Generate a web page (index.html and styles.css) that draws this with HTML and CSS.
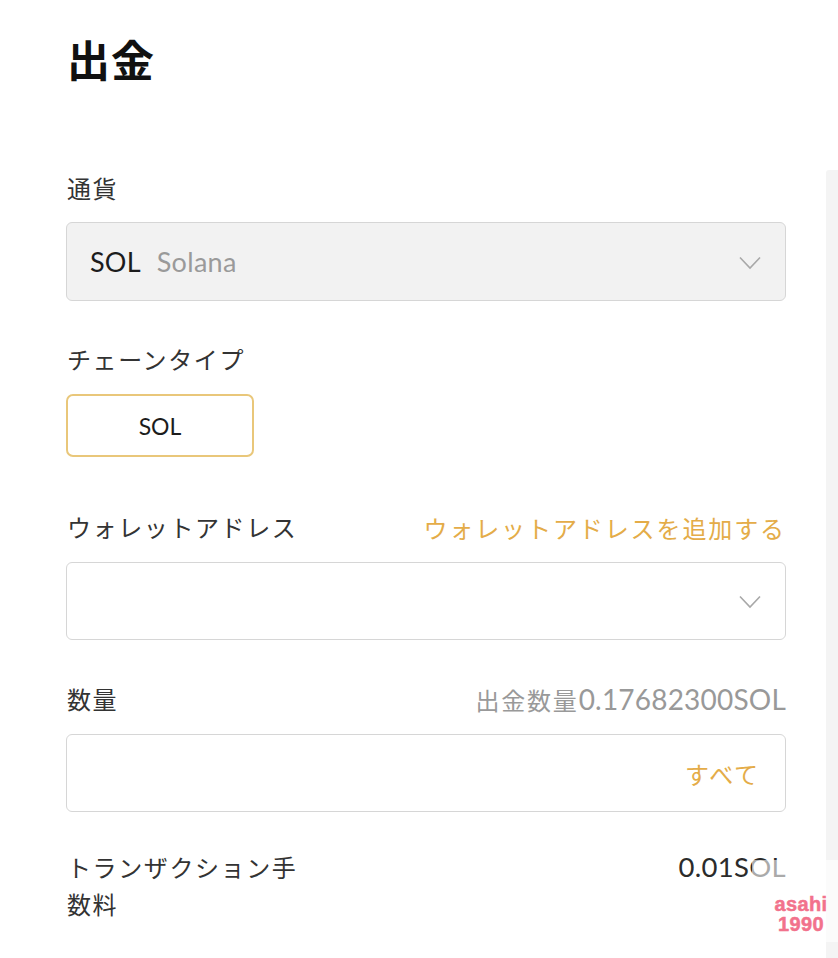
FILE: index.html
```html
<!DOCTYPE html>
<html lang="ja">
<head>
<meta charset="utf-8">
<link rel="stylesheet" href="styles.css">
</head>
<body>
<div class="page">
  <main class="main">
    <h1 class="title">出金</h1>

    <div class="label">通貨</div>
    <div class="select select-disabled">
      <span class="sym">SOL</span><span class="name">Solana</span>
      <svg class="chev" width="22" height="14" viewBox="0 0 22 14"><path d="M1 1.5 L11 12 L21 1.5" fill="none" stroke="#a8a8a8" stroke-width="1.6"/></svg>
    </div>

    <div class="label sec">チェーンタイプ</div>
    <div class="chip">SOL</div>

    <div class="row sec">
      <span class="label">ウォレットアドレス</span>
      <span class="link">ウォレットアドレスを追加する</span>
    </div>
    <div class="select">
      <svg class="chev" width="22" height="14" viewBox="0 0 22 14"><path d="M1 1.5 L11 12 L21 1.5" fill="none" stroke="#a8a8a8" stroke-width="1.6"/></svg>
    </div>

    <div class="row sec">
      <span class="label">数量</span>
      <span class="hint"><span class="hint-jp">出金数量</span>0.17682300SOL</span>
    </div>
    <div class="select input">
      <span class="link all">すべて</span>
    </div>

    <div class="fee sec">
      <span class="fee-label">トランザクション手数料</span>
      <span class="fee-value">0.01SOL</span>
    </div>
  </main>
  <aside class="side"></aside>
</div>
<div class="watermark"><span>asahi</span><span>1990</span></div>
</body>
</html>
```

FILE: styles.css
```css
html, body {
  margin: 0;
  padding: 0;
  background: #ffffff;
}
body {
  font-family: "Lato", "Noto Sans CJK JP", sans-serif;
  color: #2b2b2b;
  width: 838px;
  height: 958px;
  overflow: hidden;
  position: relative;
}
.page {
  display: flex;
  width: 838px;
  height: 958px;
}
.main {
  width: 720px;
  padding-left: 66px;
  padding-right: 40px;
  display: flex;
  flex-direction: column;
}
.side {
  width: 12px;
  margin-top: 170px;
  background: #f4f4f4;
  border-top-left-radius: 3px;
}
.title {
  margin: 33px 0 0 1px;
  font-family: "Noto Sans CJK JP", sans-serif;
  font-size: 43px;
  line-height: 50px;
  font-weight: 700;
  color: #111;
  letter-spacing: 1px;
}
.label {
  font-family: "Noto Sans CJK JP", sans-serif;
  font-size: 24px;
  line-height: 34px;
  letter-spacing: 1.6px;
  color: #333;
  padding-left: 1px;
}
.title + .label {
  margin-top: 88px;
}
.sec {
  margin-top: 41px;
}
.row.sec {
  margin-top: 53px;
}
.row.sec ~ .row.sec {
  margin-top: 42px;
}
.row {
  display: flex;
  justify-content: space-between;
  align-items: center;
  height: 34px;
}
.row .label {
  padding-left: 1px;
}
.select {
  margin-top: 18px;
  height: 78px;
  box-sizing: border-box;
  border: 1.5px solid #d6d6d6;
  border-radius: 6px;
  background: #fff;
  display: flex;
  align-items: center;
  padding: 0 24px 0 23px;
  position: relative;
}
.label + .select {
  margin-top: 17px;
}
.select-disabled {
  background: #f2f2f2;
  height: 79px;
}
.sym {
  font-size: 27px;
  color: #1c1c1c;
  letter-spacing: 0.2px;
}
.name {
  font-size: 27px;
  color: #9a9a9a;
  margin-left: 16px;
  letter-spacing: 0.3px;
}
.chev {
  margin-left: auto;
  margin-top: 2px;
}
.chip {
  margin-top: 18px;
  width: 188px;
  height: 63px;
  box-sizing: border-box;
  border: 2px solid #e9c77a;
  border-radius: 7px;
  display: flex;
  align-items: center;
  justify-content: center;
  font-size: 23px;
  color: #1c1c1c;
}
.link {
  font-family: "Noto Sans CJK JP", sans-serif;
  font-size: 24px;
  letter-spacing: 1.9px;
  color: #e4ac48;
  font-weight: 400;
}
.hint {
  font-family: "Lato", "Noto Sans CJK JP", sans-serif;
  font-size: 28px;
  color: #999;
  letter-spacing: 0.2px;
}
.hint-jp {
  font-family: "Noto Sans CJK JP", sans-serif;
  font-size: 24px;
  letter-spacing: 1.8px;
}
.input {
  justify-content: flex-end;
}
.all {
  margin-right: 1px;
}
.fee {
  display: flex;
  justify-content: space-between;
  align-items: flex-start;
  margin-top: 36px;
}
.fee-label {
  width: 240px;
  font-family: "Noto Sans CJK JP", sans-serif;
  font-size: 24px;
  line-height: 37px;
  letter-spacing: 1.6px;
  color: #333;
  padding-left: 1px;
}
.fee-value {
  font-size: 27.5px;
  line-height: 37px;
  color: #2b2b2b;
  letter-spacing: 0.3px;
}
.watermark {
  position: absolute;
  left: 752px;
  top: 860px;
  width: 86px;
  height: 82px;
  background: rgba(255, 255, 255, 0.6);
  display: flex;
  flex-direction: column;
  align-items: center;
  justify-content: flex-end;
  padding-bottom: 8px;
  box-sizing: border-box;
  font-family: "Liberation Sans", sans-serif;
  font-weight: 700;
  font-size: 20px;
  line-height: 20px;
  color: #f2728c;
}
.watermark span {
  margin-left: 12px;
  letter-spacing: 0.4px;
  -webkit-text-stroke: 0.5px #f2728c;
}
```
